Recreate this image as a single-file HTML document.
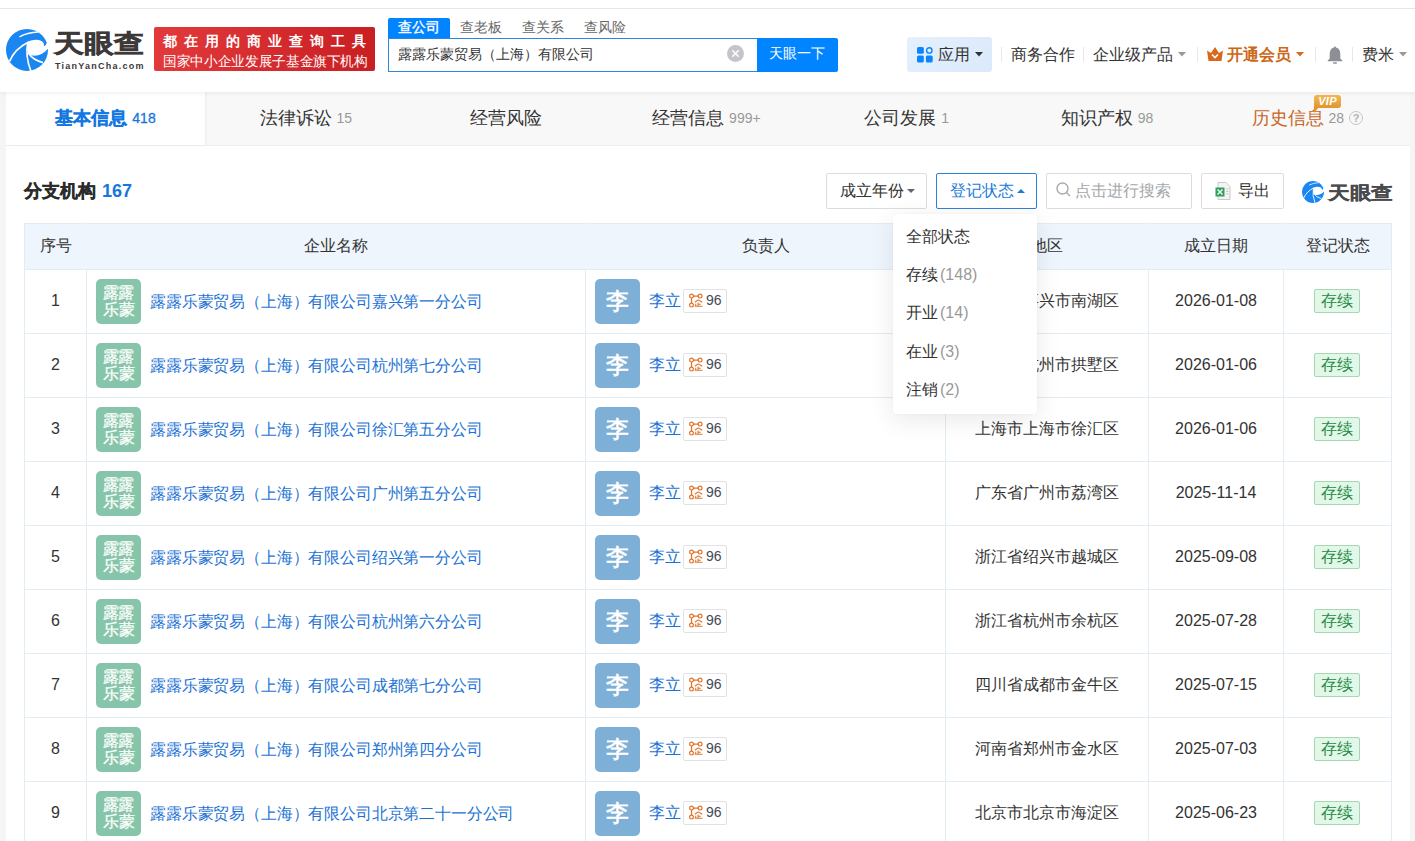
<!DOCTYPE html>
<html><head><meta charset="utf-8">
<style>
*{box-sizing:border-box;margin:0;padding:0}
html,body{width:1415px;height:841px;overflow:hidden;background:#f5f5f5;font-family:"Liberation Sans",sans-serif;color:#333}
.abs{position:absolute}
#hdr{position:absolute;left:0;top:0;width:1415px;height:92px;background:#fff;border-top:0;box-shadow:0 1px 5px rgba(0,0,0,.07);z-index:5}
#topline{position:absolute;left:0;top:8px;width:1415px;height:1px;background:#e6e6e6}
.t{position:absolute;white-space:nowrap;line-height:1}
#card{position:absolute;left:6px;top:92px;width:1404px;height:760px;background:#fff}
#tabs{position:absolute;left:0;top:0;width:1404px;height:54px;background:#f8f8f8;border-bottom:1px solid #efefef}
.tab{position:absolute;top:0;height:53px;width:200px;text-align:center;font-size:18px;line-height:53px;color:#333;white-space:nowrap}
.tab .n{font-size:14px;color:#999;margin-left:5px;position:relative;top:-1.5px}
table{border-collapse:collapse;position:absolute;left:24px;top:223px;table-layout:fixed}
td,th{border:1px solid #e4ecf3;font-weight:normal;font-size:16px;color:#333}
th{height:46px;background:#eef5fc;padding-bottom:1px;border-left-color:#eef5fc;border-right-color:#eef5fc}
th:first-child{border-left-color:#e4ecf3}th:last-child{border-right-color:#e4ecf3}
td{height:64px}
.lg{position:absolute;width:45px;height:45px;border-radius:5px;background:#86c5a9;color:#fff;font-size:15.5px;line-height:17px;text-align:center;padding-top:5px;letter-spacing:-0.5px;text-indent:-1px;-webkit-text-stroke:0.25px #fff}
.av{position:absolute;width:45px;height:45px;border-radius:5px;background:#7eb0d7;color:#fff;font-size:23px;-webkit-text-stroke:0.7px #fff;line-height:45px;text-align:center}
.lk{color:#1a72d4}
.badge{position:absolute;width:44px;height:24px;border:1px solid #dfe2e6;border-radius:2px;background:#fff}
.tag{position:absolute;width:46px;height:24px;border:1px solid #a5d7b5;background:#e3f7e9;color:#1f8e47;font-size:16px;line-height:21px;text-align:center;border-radius:2px}
.btn{position:absolute;top:173px;height:36px;border:1px solid #dcdcdc;border-radius:2px;background:#fff}
.dd{position:absolute;left:893px;top:214px;width:144px;height:200px;background:#fff;border-radius:4px;box-shadow:0 6px 26px rgba(0,0,0,.09),0 0 3px rgba(0,0,0,.04)}
.dd .it{position:absolute;left:13px;font-size:16px;line-height:1;color:#333;white-space:nowrap}
.dd .it span{color:#999;margin-left:2px}

td{position:relative;text-align:center}
td.c4{padding-top:0}
td.c1,td.c5{padding-bottom:2px}
td.c2,td.c3{text-align:left}
td.c2 .lg{left:9px;top:9px}
td.c2 .nm{position:absolute;left:63px;top:24px;font-size:16px;line-height:1;white-space:nowrap;transform:scaleX(0.99);transform-origin:0 0}
td.c3 .av{left:9px;top:9px}
td.c3 .pn{position:absolute;left:63px;top:23px;font-size:16px;line-height:1}
td.c3 .badge{left:97px;top:19px}
.bi{position:absolute;left:4px;top:3px}
.bn{position:absolute;left:22px;top:2.5px;font-size:14px;color:#434a54;line-height:1}
td.c6 .tag{left:30px;top:19px}
</style></head><body>
<div id="hdr">
  <div id="topline"></div>
  <!-- logo -->
  <svg class="abs" style="left:4px;top:27px" width="46" height="46" viewBox="0 0 46 46">
    <circle cx="23" cy="22.9" r="21" fill="#1a86f2"/>
    <path d="M15.5 9.8 Q23 5.6 34.5 5" stroke="#fff" stroke-width="1.5" fill="none"/>
    <path d="M5.5 34.3 Q11 21.5 24.3 15.2" stroke="#fff" stroke-width="1.7" fill="none"/>
    <path d="M23.8 15.5 Q21 29 27 44.5" stroke="#fff" stroke-width="1.7" fill="none"/>
    <path d="M23.8 14.6 Q32 11.2 38 14.3 Q40.8 16.4 39.8 19.6 Q41.8 18.4 42.6 16.2 L47 15 L47 21.2 L44.3 21.6 Q36.5 30.5 26.5 28.3 Q23.2 26 23.2 21 Z" fill="#fff"/>
    <path d="M23.8 25.6 Q29.5 33.6 39 35.6" stroke="#fff" stroke-width="1.7" fill="none"/>
  </svg>
  <div class="t" style="left:54px;top:31px;font-size:29px;font-weight:bold;color:#3d3939;transform:scale(1.03,0.86);transform-origin:0 0;-webkit-text-stroke:0.7px #3d3939">天眼查</div>
  <div class="t" style="left:55px;top:61.5px;font-size:9px;font-weight:bold;color:#3d3939;letter-spacing:1.25px">TianYanCha.com</div>
  <!-- red banner -->
  <div class="abs" style="left:154px;top:27px;width:221px;height:44px;border-radius:2px;background:linear-gradient(90deg,#e2393b,#c91f23)"></div>
  <div class="t" style="left:163px;top:35px;font-size:13.5px;font-weight:bold;color:#fff;letter-spacing:7.0px">都在用的商业查询工具</div>
  <div class="t" style="left:163px;top:54px;font-size:14px;color:#fff;transform:scaleX(0.975);transform-origin:0 0">国家中小企业发展子基金旗下机构</div>
  <!-- search tabs -->
  <div class="abs" style="left:388px;top:18px;width:62px;height:21px;background:#0084ff;border-radius:2px 2px 0 0"></div>
  <div class="t" style="left:398px;top:20px;font-size:14px;color:#fff;-webkit-text-stroke:0.35px #fff">查公司</div>
  <div class="t" style="left:460px;top:20px;font-size:14px;color:#666">查老板</div>
  <div class="t" style="left:522px;top:20px;font-size:14px;color:#666">查关系</div>
  <div class="t" style="left:584px;top:20px;font-size:14px;color:#666">查风险</div>
  <div class="abs" style="left:388px;top:38px;width:370px;height:34px;border:1px solid #3185e0;border-right:0;background:#fff"></div>
  <div class="t" style="left:398px;top:48px;font-size:13.6px;color:#333">露露乐蒙贸易（上海）有限公司</div>
  <div class="abs" style="left:727px;top:45px;width:17px;height:17px;border-radius:50%;background:#c5c5c9"></div>
  <svg class="abs" style="left:727px;top:45px" width="17" height="17"><path d="M5.3 5.3L11.7 11.7M11.7 5.3L5.3 11.7" stroke="#fff" stroke-width="1.5"/></svg>
  <div class="abs" style="left:757px;top:38px;width:81px;height:34px;background:#0084ff;border-radius:0 2px 2px 0"></div>
  <div class="t" style="left:769px;top:46px;font-size:14px;color:#fff">天眼一下</div>
  <!-- right nav -->
  <div class="abs" style="left:907px;top:37px;width:85px;height:35px;border-radius:3px;background:linear-gradient(135deg,#e4f0fd,#dbe9fa)"></div>
  <svg class="abs" style="left:917px;top:47px" width="16" height="16" viewBox="0 0 16 16">
    <rect x="0" y="0" width="6.8" height="6.8" rx="1.5" fill="#0a84ff"/>
    <circle cx="12.3" cy="3.4" r="2.7" fill="none" stroke="#0a84ff" stroke-width="1.4"/>
    <rect x="0" y="8.6" width="6.8" height="6.8" rx="1.5" fill="#0a84ff"/>
    <rect x="8.9" y="8.6" width="6.8" height="6.8" rx="1.5" fill="#0a84ff"/>
  </svg>
  <div class="t" style="left:938px;top:46.5px;font-size:16px;color:#333">应用</div>
  <svg class="abs" style="left:975px;top:52px" width="8" height="5"><path d="M0 0H8L4 4.5Z" fill="#333"/></svg>
  <div class="abs" style="left:1001px;top:47px;width:1px;height:15px;background:#e8e8e8"></div>
  <div class="t" style="left:1011px;top:46.5px;font-size:16px;color:#333">商务合作</div>
  <div class="abs" style="left:1083px;top:47px;width:1px;height:15px;background:#e8e8e8"></div>
  <div class="t" style="left:1093px;top:46.5px;font-size:16px;color:#333">企业级产品</div>
  <svg class="abs" style="left:1178px;top:52px" width="8" height="5"><path d="M0 0H8L4 4.5Z" fill="#999"/></svg>
  <div class="abs" style="left:1197px;top:47px;width:1px;height:15px;background:#e8e8e8"></div>
  <svg class="abs" style="left:1207px;top:47px" width="16" height="14" viewBox="0 0 16 14">
    <path d="M0 3.5L4 6L8 0L12 6L16 3.5L14.5 14H1.5Z" fill="#d9681a"/>
    <path d="M5 7.5L8 10.5L11 7.5" stroke="#fff" stroke-width="1.6" fill="none"/>
  </svg>
  <div class="t" style="left:1227px;top:46.5px;font-size:16px;font-weight:bold;color:#cc6818">开通会员</div>
  <svg class="abs" style="left:1296px;top:52px" width="8" height="5"><path d="M0 0H8L4 4.5Z" fill="#d9681a"/></svg>
  <div class="abs" style="left:1315px;top:47px;width:1px;height:15px;background:#e8e8e8"></div>
  <svg class="abs" style="left:1327px;top:46px" width="16" height="18" viewBox="0 0 16 18">
    <path d="M8 0.5C8.6 .5 9 1 9 1.6C12 2.3 13.3 5 13.3 8V12.6L15.3 14.6V15.3H0.7V14.6L2.7 12.6V8C2.7 5 4 2.3 7 1.6C7 1 7.4 .5 8 .5Z" fill="#8c8f94"/>
    <rect x="6" y="16.2" width="4" height="1.5" rx=".7" fill="#8c8f94"/>
  </svg>
  <div class="abs" style="left:1352px;top:47px;width:1px;height:15px;background:#e8e8e8"></div>
  <div class="t" style="left:1362px;top:46.5px;font-size:16px;color:#333">费米</div>
  <svg class="abs" style="left:1399px;top:52px" width="8" height="5"><path d="M0 0H8L4 4.5Z" fill="#999"/></svg>
</div>

<div id="card">
  <div id="tabs">
    <div class="tab" style="left:0;width:199px;background:#fff;color:#1477e2;font-weight:bold;-webkit-text-stroke:0.3px #1477e2;box-shadow:1px 0 2px rgba(0,0,0,.05)">基本信息<span class="n" style="color:#1a73d4;font-weight:normal">418</span></div>
    <div class="tab" style="left:199.8px">法律诉讼<span class="n">15</span></div>
    <div class="tab" style="left:400.1px">经营风险</div>
    <div class="tab" style="left:600.4px">经营信息<span class="n">999+</span></div>
    <div class="tab" style="left:800.7px">公司发展<span class="n">1</span></div>
    <div class="tab" style="left:1001.0px">知识产权<span class="n">98</span></div>
    <div class="tab" style="left:1201.3px;color:#c9651f">历史信息<span class="n">28</span><span style="display:inline-block;width:14px;height:14px;border:1.3px solid #c2c6ca;border-radius:50%;font-size:11px;line-height:12px;color:#aeb2b6;font-weight:bold;vertical-align:middle;margin-left:5px;position:relative;top:-1px">?</span></div>
  </div>
</div>

<!-- VIP -->
<div class="abs" style="left:1314px;top:95px;width:27px;height:13px;border-radius:3px 3px 3px 0;background:linear-gradient(#f2b955,#e2952e)"></div>
<svg class="abs" style="left:1314px;top:107px" width="5" height="6"><path d="M0 0H5L0 6Z" fill="#e2952e"/></svg>
<div class="t" style="left:1314px;top:96px;width:27px;text-align:center;font-size:11px;font-weight:bold;font-style:italic;color:#fff;letter-spacing:0.3px">VIP</div>

<!-- section title -->
<div class="t" style="left:24px;top:181.5px;font-size:18px;font-weight:bold;color:#2b2b2b;-webkit-text-stroke:0.3px #2b2b2b">分支机构</div>
<div class="t" style="left:102px;top:182px;font-size:18px;font-weight:bold;color:#1677e0">167</div>

<div class="btn" style="left:826px;width:101px"></div>
<div class="t" style="left:840px;top:182.5px;font-size:16px;color:#333">成立年份</div>
<svg class="abs" style="left:906.5px;top:189px" width="8" height="5"><path d="M0 0H8L4 4Z" fill="#666"/></svg>

<div class="btn" style="left:936px;width:101px;border-color:#2a83d8"></div>
<div class="t" style="left:950px;top:182.5px;font-size:16px;color:#1c7ad8">登记状态</div>
<svg class="abs" style="left:1017px;top:189px" width="8" height="5"><path d="M0 4H8L4 0Z" fill="#1c7ad8"/></svg>

<div class="btn" style="left:1046px;width:146px"></div>
<svg class="abs" style="left:1056px;top:182px" width="15" height="16" viewBox="0 0 15 16"><circle cx="6.5" cy="6.5" r="5.5" stroke="#aaa" stroke-width="1.4" fill="none"/><path d="M10.5 10.5L14 14" stroke="#aaa" stroke-width="1.4"/></svg>
<div class="t" style="left:1075px;top:183px;font-size:16px;color:#a4a7ab">点击进行搜索</div>

<div class="btn" style="left:1201px;width:83px"></div>
<svg class="abs" style="left:1215px;top:182px" width="16" height="18" viewBox="0 0 16 18">
  <path d="M3 0.5H11L15 4.5V17.5H3Z" fill="#f4f4f4" stroke="#c9c9c9" stroke-width="1"/>
  <rect x="0.5" y="5.5" width="9" height="9" fill="#2ea05a"/>
  <path d="M2.5 7.5L7.5 12.5M7.5 7.5L2.5 12.5" stroke="#fff" stroke-width="1.3"/>
  <path d="M11 7H13.5M11 9.5H13.5M11 12H13.5" stroke="#c9c9c9"/>
</svg>
<div class="t" style="left:1238px;top:183px;font-size:16px;color:#333">导出</div>

<!-- small logo -->
<svg class="abs" style="left:1301px;top:179.5px" width="24" height="24" viewBox="0 0 46 46">
    <circle cx="23" cy="22.9" r="21" fill="#1a86f2"/>
    <path d="M15.5 9.8 Q23 5.6 34.5 5" stroke="#fff" stroke-width="1.5" fill="none"/>
    <path d="M5.5 34.3 Q11 21.5 24.3 15.2" stroke="#fff" stroke-width="1.7" fill="none"/>
    <path d="M23.8 15.5 Q21 29 27 44.5" stroke="#fff" stroke-width="1.7" fill="none"/>
    <path d="M23.8 14.6 Q32 11.2 38 14.3 Q40.8 16.4 39.8 19.6 Q41.8 18.4 42.6 16.2 L47 15 L47 21.2 L44.3 21.6 Q36.5 30.5 26.5 28.3 Q23.2 26 23.2 21 Z" fill="#fff"/>
    <path d="M23.8 25.6 Q29.5 33.6 39 35.6" stroke="#fff" stroke-width="1.7" fill="none"/>
  </svg>
<div class="t" style="left:1327.5px;top:183.5px;font-size:22px;font-weight:bold;color:#4a4a4d;transform:scale(0.98,0.81);transform-origin:0 0;-webkit-text-stroke:0.3px #4a4a4d">天眼查</div>

<table>
<colgroup><col style="width:62px"><col style="width:499px"><col style="width:360px"><col style="width:203px"><col style="width:135px"><col style="width:108px"></colgroup>
<tr><th>序号</th><th>企业名称</th><th>负责人</th><th>地区</th><th>成立日期</th><th>登记状态</th></tr>
<tr><td class="c1">1</td><td class="c2"><div class="lg">露露<br>乐蒙</div><span class="lk nm">露露乐蒙贸易（上海）有限公司嘉兴第一分公司</span></td><td class="c3"><div class="av">李</div><span class="lk pn">李立</span><div class="badge"><svg class="bi" width="16" height="16" viewBox="0 0 16 16"><circle cx="3.5" cy="3.1" r="1.9" fill="none" stroke="#e0712b" stroke-width="1.2"/><circle cx="12.1" cy="3.1" r="1.9" fill="none" stroke="#e0712b" stroke-width="1.2"/><circle cx="3.5" cy="12.1" r="1.9" fill="none" stroke="#e0712b" stroke-width="1.2"/><path d="M5.4 3.1H10.2M3.5 5V10.2" stroke="#e0712b" stroke-width="1.2"/><path d="M6.8 9.3L10.1 6.8L14.3 9.3M10.1 9.6V13.2M10.1 11.2H12.7M7.7 10.8V13.2M6.8 13.3H14.4" stroke="#e0712b" stroke-width="1.1" fill="none"/></svg><span class="bn">96</span></div></td><td class="c4">浙江省嘉兴市南湖区</td><td class="c5">2026-01-08</td><td class="c6"><div class="tag">存续</div></td></tr>
<tr><td class="c1">2</td><td class="c2"><div class="lg">露露<br>乐蒙</div><span class="lk nm">露露乐蒙贸易（上海）有限公司杭州第七分公司</span></td><td class="c3"><div class="av">李</div><span class="lk pn">李立</span><div class="badge"><svg class="bi" width="16" height="16" viewBox="0 0 16 16"><circle cx="3.5" cy="3.1" r="1.9" fill="none" stroke="#e0712b" stroke-width="1.2"/><circle cx="12.1" cy="3.1" r="1.9" fill="none" stroke="#e0712b" stroke-width="1.2"/><circle cx="3.5" cy="12.1" r="1.9" fill="none" stroke="#e0712b" stroke-width="1.2"/><path d="M5.4 3.1H10.2M3.5 5V10.2" stroke="#e0712b" stroke-width="1.2"/><path d="M6.8 9.3L10.1 6.8L14.3 9.3M10.1 9.6V13.2M10.1 11.2H12.7M7.7 10.8V13.2M6.8 13.3H14.4" stroke="#e0712b" stroke-width="1.1" fill="none"/></svg><span class="bn">96</span></div></td><td class="c4">浙江省杭州市拱墅区</td><td class="c5">2026-01-06</td><td class="c6"><div class="tag">存续</div></td></tr>
<tr><td class="c1">3</td><td class="c2"><div class="lg">露露<br>乐蒙</div><span class="lk nm">露露乐蒙贸易（上海）有限公司徐汇第五分公司</span></td><td class="c3"><div class="av">李</div><span class="lk pn">李立</span><div class="badge"><svg class="bi" width="16" height="16" viewBox="0 0 16 16"><circle cx="3.5" cy="3.1" r="1.9" fill="none" stroke="#e0712b" stroke-width="1.2"/><circle cx="12.1" cy="3.1" r="1.9" fill="none" stroke="#e0712b" stroke-width="1.2"/><circle cx="3.5" cy="12.1" r="1.9" fill="none" stroke="#e0712b" stroke-width="1.2"/><path d="M5.4 3.1H10.2M3.5 5V10.2" stroke="#e0712b" stroke-width="1.2"/><path d="M6.8 9.3L10.1 6.8L14.3 9.3M10.1 9.6V13.2M10.1 11.2H12.7M7.7 10.8V13.2M6.8 13.3H14.4" stroke="#e0712b" stroke-width="1.1" fill="none"/></svg><span class="bn">96</span></div></td><td class="c4">上海市上海市徐汇区</td><td class="c5">2026-01-06</td><td class="c6"><div class="tag">存续</div></td></tr>
<tr><td class="c1">4</td><td class="c2"><div class="lg">露露<br>乐蒙</div><span class="lk nm">露露乐蒙贸易（上海）有限公司广州第五分公司</span></td><td class="c3"><div class="av">李</div><span class="lk pn">李立</span><div class="badge"><svg class="bi" width="16" height="16" viewBox="0 0 16 16"><circle cx="3.5" cy="3.1" r="1.9" fill="none" stroke="#e0712b" stroke-width="1.2"/><circle cx="12.1" cy="3.1" r="1.9" fill="none" stroke="#e0712b" stroke-width="1.2"/><circle cx="3.5" cy="12.1" r="1.9" fill="none" stroke="#e0712b" stroke-width="1.2"/><path d="M5.4 3.1H10.2M3.5 5V10.2" stroke="#e0712b" stroke-width="1.2"/><path d="M6.8 9.3L10.1 6.8L14.3 9.3M10.1 9.6V13.2M10.1 11.2H12.7M7.7 10.8V13.2M6.8 13.3H14.4" stroke="#e0712b" stroke-width="1.1" fill="none"/></svg><span class="bn">96</span></div></td><td class="c4">广东省广州市荔湾区</td><td class="c5">2025-11-14</td><td class="c6"><div class="tag">存续</div></td></tr>
<tr><td class="c1">5</td><td class="c2"><div class="lg">露露<br>乐蒙</div><span class="lk nm">露露乐蒙贸易（上海）有限公司绍兴第一分公司</span></td><td class="c3"><div class="av">李</div><span class="lk pn">李立</span><div class="badge"><svg class="bi" width="16" height="16" viewBox="0 0 16 16"><circle cx="3.5" cy="3.1" r="1.9" fill="none" stroke="#e0712b" stroke-width="1.2"/><circle cx="12.1" cy="3.1" r="1.9" fill="none" stroke="#e0712b" stroke-width="1.2"/><circle cx="3.5" cy="12.1" r="1.9" fill="none" stroke="#e0712b" stroke-width="1.2"/><path d="M5.4 3.1H10.2M3.5 5V10.2" stroke="#e0712b" stroke-width="1.2"/><path d="M6.8 9.3L10.1 6.8L14.3 9.3M10.1 9.6V13.2M10.1 11.2H12.7M7.7 10.8V13.2M6.8 13.3H14.4" stroke="#e0712b" stroke-width="1.1" fill="none"/></svg><span class="bn">96</span></div></td><td class="c4">浙江省绍兴市越城区</td><td class="c5">2025-09-08</td><td class="c6"><div class="tag">存续</div></td></tr>
<tr><td class="c1">6</td><td class="c2"><div class="lg">露露<br>乐蒙</div><span class="lk nm">露露乐蒙贸易（上海）有限公司杭州第六分公司</span></td><td class="c3"><div class="av">李</div><span class="lk pn">李立</span><div class="badge"><svg class="bi" width="16" height="16" viewBox="0 0 16 16"><circle cx="3.5" cy="3.1" r="1.9" fill="none" stroke="#e0712b" stroke-width="1.2"/><circle cx="12.1" cy="3.1" r="1.9" fill="none" stroke="#e0712b" stroke-width="1.2"/><circle cx="3.5" cy="12.1" r="1.9" fill="none" stroke="#e0712b" stroke-width="1.2"/><path d="M5.4 3.1H10.2M3.5 5V10.2" stroke="#e0712b" stroke-width="1.2"/><path d="M6.8 9.3L10.1 6.8L14.3 9.3M10.1 9.6V13.2M10.1 11.2H12.7M7.7 10.8V13.2M6.8 13.3H14.4" stroke="#e0712b" stroke-width="1.1" fill="none"/></svg><span class="bn">96</span></div></td><td class="c4">浙江省杭州市余杭区</td><td class="c5">2025-07-28</td><td class="c6"><div class="tag">存续</div></td></tr>
<tr><td class="c1">7</td><td class="c2"><div class="lg">露露<br>乐蒙</div><span class="lk nm">露露乐蒙贸易（上海）有限公司成都第七分公司</span></td><td class="c3"><div class="av">李</div><span class="lk pn">李立</span><div class="badge"><svg class="bi" width="16" height="16" viewBox="0 0 16 16"><circle cx="3.5" cy="3.1" r="1.9" fill="none" stroke="#e0712b" stroke-width="1.2"/><circle cx="12.1" cy="3.1" r="1.9" fill="none" stroke="#e0712b" stroke-width="1.2"/><circle cx="3.5" cy="12.1" r="1.9" fill="none" stroke="#e0712b" stroke-width="1.2"/><path d="M5.4 3.1H10.2M3.5 5V10.2" stroke="#e0712b" stroke-width="1.2"/><path d="M6.8 9.3L10.1 6.8L14.3 9.3M10.1 9.6V13.2M10.1 11.2H12.7M7.7 10.8V13.2M6.8 13.3H14.4" stroke="#e0712b" stroke-width="1.1" fill="none"/></svg><span class="bn">96</span></div></td><td class="c4">四川省成都市金牛区</td><td class="c5">2025-07-15</td><td class="c6"><div class="tag">存续</div></td></tr>
<tr><td class="c1">8</td><td class="c2"><div class="lg">露露<br>乐蒙</div><span class="lk nm">露露乐蒙贸易（上海）有限公司郑州第四分公司</span></td><td class="c3"><div class="av">李</div><span class="lk pn">李立</span><div class="badge"><svg class="bi" width="16" height="16" viewBox="0 0 16 16"><circle cx="3.5" cy="3.1" r="1.9" fill="none" stroke="#e0712b" stroke-width="1.2"/><circle cx="12.1" cy="3.1" r="1.9" fill="none" stroke="#e0712b" stroke-width="1.2"/><circle cx="3.5" cy="12.1" r="1.9" fill="none" stroke="#e0712b" stroke-width="1.2"/><path d="M5.4 3.1H10.2M3.5 5V10.2" stroke="#e0712b" stroke-width="1.2"/><path d="M6.8 9.3L10.1 6.8L14.3 9.3M10.1 9.6V13.2M10.1 11.2H12.7M7.7 10.8V13.2M6.8 13.3H14.4" stroke="#e0712b" stroke-width="1.1" fill="none"/></svg><span class="bn">96</span></div></td><td class="c4">河南省郑州市金水区</td><td class="c5">2025-07-03</td><td class="c6"><div class="tag">存续</div></td></tr>
<tr><td class="c1">9</td><td class="c2"><div class="lg">露露<br>乐蒙</div><span class="lk nm">露露乐蒙贸易（上海）有限公司北京第二十一分公司</span></td><td class="c3"><div class="av">李</div><span class="lk pn">李立</span><div class="badge"><svg class="bi" width="16" height="16" viewBox="0 0 16 16"><circle cx="3.5" cy="3.1" r="1.9" fill="none" stroke="#e0712b" stroke-width="1.2"/><circle cx="12.1" cy="3.1" r="1.9" fill="none" stroke="#e0712b" stroke-width="1.2"/><circle cx="3.5" cy="12.1" r="1.9" fill="none" stroke="#e0712b" stroke-width="1.2"/><path d="M5.4 3.1H10.2M3.5 5V10.2" stroke="#e0712b" stroke-width="1.2"/><path d="M6.8 9.3L10.1 6.8L14.3 9.3M10.1 9.6V13.2M10.1 11.2H12.7M7.7 10.8V13.2M6.8 13.3H14.4" stroke="#e0712b" stroke-width="1.1" fill="none"/></svg><span class="bn">96</span></div></td><td class="c4">北京市北京市海淀区</td><td class="c5">2025-06-23</td><td class="c6"><div class="tag">存续</div></td></tr>
</table>

<div class="dd">
  <div class="it" style="top:15px">全部状态</div>
  <div class="it" style="top:53px">存续<span>(148)</span></div>
  <div class="it" style="top:91px">开业<span>(14)</span></div>
  <div class="it" style="top:129.5px">在业<span>(3)</span></div>
  <div class="it" style="top:167.5px">注销<span>(2)</span></div>
</div>
</body></html>
